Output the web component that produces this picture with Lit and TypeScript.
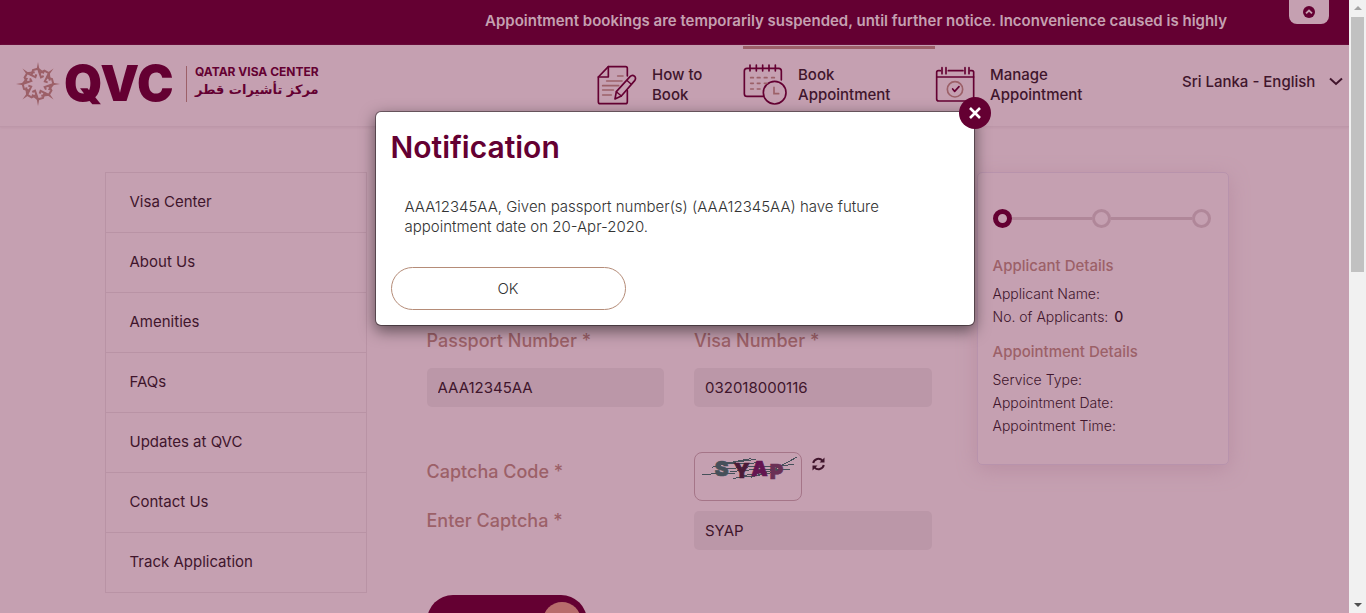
import { LitElement, html, css, svg } from "lit";
import { customElement } from "lit/decorators.js";

const sections = ["Visa Center", "About Us", "Amenities", "FAQs", "Updates at QVC", "Contact Us", "Track Application"];

const petals = [0, 45, 90, 135, 180, 225, 270, 315];

const scribbles = [
  "M66 463h16l42 -4h40", "M96 442l52 -14 64 -12", "M120 428l90 4 20 -5", "M140 430l88 -12",
  "M160 475l80 -10 50 -10", "M130 447l100 -8h60", "M150 455l90 -8h90", "M190 467l80 -14 46 -4", "M230 442l60 -3 52 -6",
  "M212 472l66 -22 72 -38",
];

const howToIcon = html`<svg width="40" height="42" viewBox="350 190 120 126" fill="none" stroke-linejoin="round" stroke-linecap="round" aria-hidden="true">
  <g stroke="#640032" stroke-width="5">
    <path d="M441 226V203q0 -5 -5 -5H384L354 229V303q0 6 6 6H435q6 0 6 -6V270" />
    <path d="M384 198V229H354" />
    <path d="M404 295L408 273L449 228Q456 221 463 227Q468 233 463 240L423 286Z" />
    <path d="M408 273L423 286M441 240L452 250" stroke-width="4" />
  </g>
  <g stroke="#9c6068" stroke-width="5">
    <path d="M412 226h16M379 241h46M367 255h48M367 268h32M367 283h26" />
  </g>
</svg>`;

const bookIcon = html`<svg width="46" height="43" viewBox="789 189 138 129" fill="none" stroke-linecap="round" aria-hidden="true">
  <g stroke="#640032" stroke-width="5">
    <path d="M850 289H801q-8 0 -8 -8V213q0 -8 8 -8H896q8 0 8 8V240" />
    <path d="M810 195v18M829 195v18M848 195v18M867 195v18M886 195v18" />
    <circle cx="884" cy="278" r="34" />
  </g>
  <path d="M812 233h8M832 233h8M853 233h8M875 233h8M812 250h8M832 250h8M853 250h8M812 267h8M832 267h8" stroke="#9c6068" stroke-width="5" />
  <path d="M882 262v19h14" stroke="#9c6068" stroke-width="5" />
</svg>`;

const manageIcon = html`<svg width="41" height="37" viewBox="28 198 123 111" fill="none" stroke-linecap="round" stroke-linejoin="round" aria-hidden="true">
  <g stroke="#640032" stroke-width="5">
    <path d="M44 212H38q-5 0 -5 5V297q0 6 6 6H138q6 0 6 -6V217q0 -5 -5 -5H134M68 212H112" />
    <path d="M33 231H144M49 203v18M61 203v18M118 203v18M130 203v18" />
    <path d="M81 267l6 7 13 -14" />
  </g>
  <circle cx="88" cy="268" r="23" stroke="#9c6068" stroke-width="5" />
</svg>`;

const navItems = [
  { icon: howToIcon, first: "How to", second: "Book", active: false },
  { icon: bookIcon, first: "Book", second: "Appointment", active: true },
  { icon: manageIcon, first: "Manage", second: "Appointment", active: false },
];

@customElement("app-root")
export class AppRoot extends LitElement {
  static styles = css`
    :host {
      --wine: #640032;
      --page: #c5a0b1;
      --clay: #9c6068;
      --ink: #40152c;
      --line: #b993a5;
      display: flex;
      position: relative;
      height: 100vh;
      overflow: hidden;
      background: var(--page);
      color: var(--ink);
      font-family: Inter, "Noto Sans", sans-serif;
      font-size: 14px;
    }
    * { box-sizing: border-box; }
    a { color: inherit; text-decoration: none; }
    button, input, select { font: inherit; color: inherit; }
    .page { flex: 1; min-width: 0; height: 100%; overflow: hidden; position: relative; }
    .notice {
      display: flex; justify-content: flex-end; align-items: center; height: 45px;
      padding: 0 122px 4px 0; background: var(--wine); color: var(--page);
      font-size: 15px; font-weight: 600; white-space: nowrap;
    }
    .collapse {
      position: absolute; top: 0; right: 20px; width: 40px; height: 24px; padding: 0;
      display: grid; place-items: center; border: 0; border-radius: 0 0 8px 8px; background: var(--page);
    }
    .header {
      display: flex; align-items: flex-start; height: 82px; padding-left: 16px;
      border-bottom: 1px solid #bd97a9; box-shadow: 0 1px 2px #bd97a9;
    }
    .brand { display: flex; align-items: center; height: 78px; color: var(--wine); }
    .mark { display: block; }
    .word { width: 120px; padding-left: 4px; font-size: 49px; line-height: 48px; font-weight: 900; }
    .tag { margin-left: 6px; padding-left: 8px; border-left: 1px solid var(--clay); height: 36px; line-height: 16px; }
    .latin { font-size: 12px; font-weight: 700; line-height: 12px; white-space: nowrap; }
    .arabic { font-family: "DejaVu Sans", sans-serif; font-size: 13px; font-weight: 700; line-height: 24px; white-space: nowrap; }
    .nav { display: flex; margin-left: auto; }
    .item {
      display: grid; grid-template-columns: 55px auto; align-items: center; height: 74px; width: 192px;
      margin-top: 1px; border-top: 3px solid transparent;
      font-size: 15px; line-height: 20px; font-weight: 500;
    }
    .item:first-child { width: 146px; }
    .item.active { border-color: var(--clay); }
    .item svg { display: block; }
    .lang { display: flex; align-items: center; height: 72px; margin-left: 55px; padding-right: 6px; font-weight: 500; font-size: 15px; }
    .lang select { appearance: none; width: 147px; padding: 0; border: 0; background: none; }
    .body {
      display: grid; grid-template-columns: 262px minmax(0, 1fr) 252px; align-items: start;
      max-width: 1140px; margin: 0 auto; padding: 45px 16px 0 0;
    }
    .side { display: flex; flex-direction: column; border: 1px solid var(--line); border-bottom: 0; }
    .side a { height: 60px; padding-left: 24px; line-height: 58px; border-bottom: 1px solid var(--line); font-size: 15px; }
    .form { padding: 157px 45px 0 60px; }
    .fields { display: grid; grid-template-columns: 1fr 1fr; column-gap: 30px; align-items: start; }
    .field { display: grid; gap: 15px; }
    .form label, .label { color: var(--clay); font-size: 18px; line-height: 24px; font-weight: 500; }
    .form input {
      width: 100%; height: 39px; padding: 0 11px; border: 0; border-radius: 5px;
      background: #bb97a8; font-size: 15px; outline: 0;
    }
    .captcha { margin-top: 45px; row-gap: 10px; }
    .captcha .label { padding-top: 8px; }
    .captcha label { line-height: 20px; }
    .code { display: flex; gap: 10px; }
    .code .image { display: block; border: 1px solid #a57588; border-radius: 8px; }
    .refresh { align-self: flex-start; margin-top: 5px; padding: 0; border: 0; background: none; }
    .refresh svg { display: block; }
    .submit {
      display: flex; justify-content: flex-end; align-items: center; width: 160px; height: 52px;
      margin-top: 45px; padding: 0 6px; border: 0; border-radius: 26px; background: var(--wine);
    }
    .dot { width: 38px; height: 38px; border-radius: 50%; background: #b86c6c; }
    .card {
      height: 293px; padding: 36px 15px 0; border: 1px solid #b893ac; border-radius: 5px;
      box-shadow: 0 5px 20px #b98fa3;
    }
    .steps { display: flex; align-items: center; width: 218px; margin-bottom: 26px; }
    .step { width: 19px; height: 19px; border: 3px solid #b08799; border-radius: 50%; }
    .step.on { border: 5px solid var(--wine); }
    .bar { flex: 1; height: 3px; background: #b08799; }
    .card h3 { margin: 0 0 4px; color: var(--clay); font-size: 15px; line-height: 24px; font-weight: 500; }
    .card p { margin: 0; font-size: 14px; line-height: 23px; font-weight: 300; }
    .card p + h3 { margin-top: 12px; }
    .card b { margin-left: 2px; font-weight: 500; }
    .overlay { position: absolute; inset: 0; display: flex; justify-content: center; align-items: flex-start; padding-top: 111px; }
    .modal {
      position: relative; width: 600px; padding: 15px; background: #fff; border: 1px solid rgba(0, 0, 0, 0.4);
      background-clip: padding-box; border-radius: 6px; box-shadow: 0 5px 15px rgba(0, 0, 0, 0.5); color: #333;
    }
    .modal h2 { margin: 0; color: var(--wine); font-size: 30px; line-height: 40px; font-weight: 600; }
    .modal p { margin: 0; padding: 30px 14px; font-size: 15px; line-height: 20px; font-weight: 300; }
    .ok {
      display: block; width: 235px; height: 43px; border: 1px solid #b58c78; border-radius: 22px;
      background: #fff; font-size: 15px; font-weight: 300;
    }
    .close {
      position: absolute; top: -15px; right: -17px; width: 32px; height: 32px; padding: 0; border: 0;
      border-radius: 50%; display: grid; place-items: center; background: var(--wine);
    }
    .scroll {
      display: flex; flex-direction: column; align-items: center; justify-content: space-between;
      width: 17px; height: 100%; padding: 6px 0; background: #f1f1f1;
    }
    .thumb { width: 13px; flex: 0 0 255px; margin: 7px 0 auto; background: #c1c1c1; }
  `;

  render() {
    return html`
      <div class="page">
        <div class="notice">Appointment bookings are temporarily suspended, until further notice. Inconvenience caused is highly</div>
        <button class="collapse" aria-label="Collapse">
          <svg width="12" height="12" viewBox="0 0 12 12"><circle cx="6" cy="6" r="6" fill="#640032" /><path d="M3 7.4L6 4.5L9 7.4" fill="none" stroke="#c5a0b1" stroke-width="1.8" /></svg>
        </button>
        <header class="header">
          <a class="brand" href="#">
            <svg class="mark" width="44" height="44" viewBox="-66 -66 132 132" fill="none" stroke="#9c6068" stroke-width="6" aria-hidden="true">
              ${petals.map((a) => svg`<g transform="rotate(${a})"><path d="M-4 -44L0 -66L4 -44Z" fill="#9c6068" stroke="none" /><path d="M-20 -25L-15 -42L0 -46L18 -32M0 -46L9 -20L17 -24" /></g>`)}
            </svg>
            <span class="word">QVC</span>
            <span class="tag"><div class="latin">QATAR VISA CENTER</div><div class="arabic" lang="ar" dir="rtl">مركز تأشيرات قطر</div></span>
          </a>
          <nav class="nav">
            ${navItems.map((n) => html`<a class="item ${n.active ? "active" : ""}" href="#">${n.icon}<span>${n.first}<br />${n.second}</span></a>`)}
          </nav>
          <div class="lang">
            <select aria-label="Country and language"><option>Sri Lanka - English</option></select>
            <svg width="14" height="9" viewBox="0 0 14 9" fill="none" stroke="#40152c" stroke-width="2"><path d="M1 1.5L7 7L13 1.5" /></svg>
          </div>
        </header>
        <main class="body">
          <nav class="side">${sections.map((s) => html`<a href="#">${s}</a>`)}</nav>
          <form class="form">
            <div class="fields">
              <div class="field"><label for="passport">Passport Number *</label><input id="passport" value="AAA12345AA" /></div>
              <div class="field"><label for="visa">Visa Number *</label><input id="visa" value="032018000116" /></div>
            </div>
            <div class="fields captcha">
              <div class="label">Captcha Code *</div>
              <div class="code">
                <svg class="image" width="108" height="49" viewBox="45 399 318 141" role="img" aria-label="Captcha">
                  <g fill="none" stroke="#46505a" stroke-width="3" shape-rendering="crispEdges">${scribbles.map((d) => svg`<path d=${d} />`)}</g>
                  <g font-family="Inter, sans-serif" font-weight="900" font-size="62" stroke-width="2">
                    <text x="104" y="468" fill="#46505a" stroke="#46505a">S</text>
                    <text x="161" y="473" fill="#4a1a38" stroke="#4a1a38">Y</text>
                    <text x="214" y="468" fill="#641450" stroke="#641450">A</text>
                    <text x="269" y="477" fill="#6a3055" stroke="#6a3055">P</text>
                  </g>
                </svg>
                <button class="refresh" type="button" aria-label="Refresh captcha">
                  <svg width="13" height="14" viewBox="0 0 13 14" fill="none" stroke="#40152c" stroke-width="2">
                    <path d="M1.2 6A5.4 5.4 0 0 1 10.5 3.6M11.8 8A5.4 5.4 0 0 1 2.5 10.4" />
                    <path d="M12.5 0.5V5.5H7.5ZM0.5 13.5V8.5H5.5Z" fill="#40152c" stroke="none" />
                  </svg>
                </button>
              </div>
              <label for="captcha">Enter Captcha *</label>
              <input id="captcha" value="SYAP" />
            </div>
            <button class="submit" type="button" aria-label="Submit"><span class="dot"></span></button>
          </form>
          <aside class="card">
            <div class="steps"><span class="step on"></span><span class="bar"></span><span class="step"></span><span class="bar"></span><span class="step"></span></div>
            <h3>Applicant Details</h3>
            <p>Applicant Name:</p>
            <p>No. of Applicants: <b>0</b></p>
            <h3>Appointment Details</h3>
            <p>Service Type:</p>
            <p>Appointment Date:</p>
            <p>Appointment Time:</p>
          </aside>
        </main>
        <div class="overlay">
          <section class="modal" role="dialog" aria-labelledby="title">
            <h2 id="title">Notification</h2>
            <p>AAA12345AA, Given passport number(s) (AAA12345AA) have future appointment date on 20-Apr-2020.</p>
            <button class="ok">OK</button>
            <button class="close" aria-label="Close">
              <svg width="12" height="12" viewBox="0 0 12 12" stroke="#fff" stroke-width="2.6"><path d="M1 1L11 11M11 1L1 11" /></svg>
            </button>
          </section>
        </div>
      </div>
      <div class="scroll" aria-hidden="true">
        <svg width="8" height="4" viewBox="0 0 8 4"><path d="M0 4L4 0L8 4Z" fill="#a3a3a3" /></svg>
        <span class="thumb"></span>
        <svg width="8" height="4" viewBox="0 0 8 4"><path d="M0 0L4 4L8 0Z" fill="#505050" /></svg>
      </div>
    `;
  }
}
